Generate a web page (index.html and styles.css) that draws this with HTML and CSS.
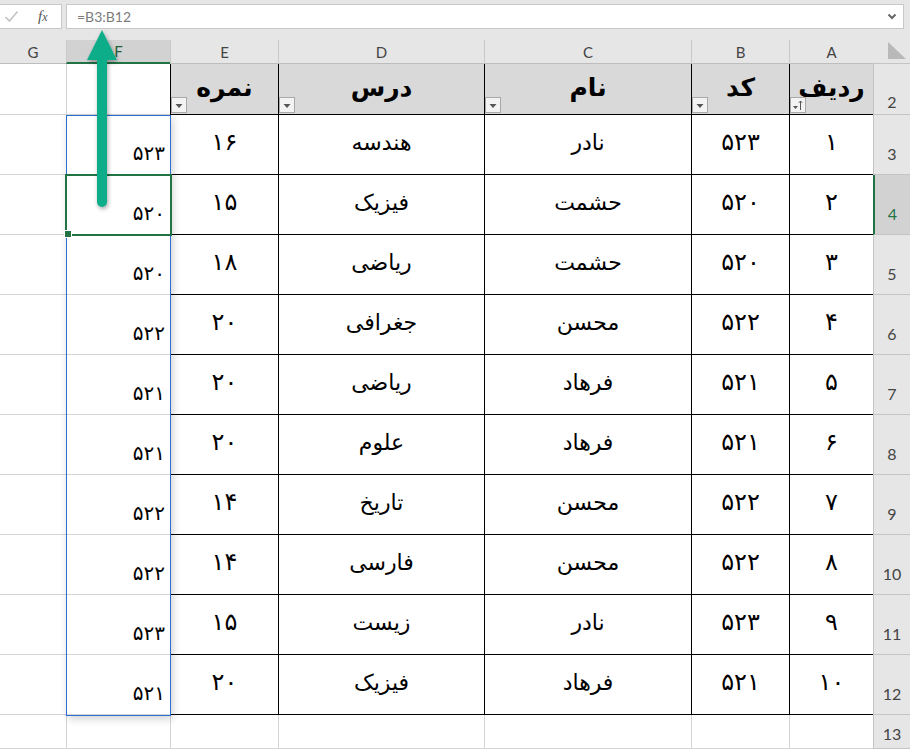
FILE: index.html
```html
<!DOCTYPE html>
<html lang="fa">
<head>
<meta charset="utf-8">
<title>Sheet</title>
<link rel="stylesheet" href="styles.css">
</head>
<body>
<div class="app">
  <div class="fbar">
    <div class="fbtns">
      <svg class="check" width="15" height="13" viewBox="0 0 15 13"><polyline points="1.5,7 5.5,11 13.5,1.5" fill="none" stroke="#c3c3c3" stroke-width="1.6"/></svg>
      <span class="fx">f<span class="fxx">x</span></span>
    </div>
    <div class="finput">
      <span class="ftext">=B3:B12</span>
      <svg class="chev" width="10" height="7" viewBox="0 0 10 7"><polyline points="1.5,1.5 5,5 8.5,1.5" fill="none" stroke="#666" stroke-width="2"/></svg>
    </div>
  </div>
  <div class="wrap">
    <div class="sheet">
      <!-- column headers -->
      <div class="corner"><svg width="18" height="18" viewBox="0 0 18 18"><polygon points="0,0 0,17 18,17" fill="#b9b9b9"/></svg></div>
      <div class="ch">A</div><div class="ch">B</div><div class="ch">C</div><div class="ch">D</div><div class="ch">E</div><div class="ch sel">F</div><div class="ch last">G</div>

      <!-- row 2 -->
      <div class="rh r2">2</div>
      <div class="th">ردیف<span class="fb"><svg width="14" height="14" viewBox="0 0 14 14"><polygon points="2,8 7,8 4.5,11" fill="#555"/><path d="M9.5 12 V3 M7.8 4.8 L9.5 3 L11.2 4.8" fill="none" stroke="#555" stroke-width="1"/></svg></span></div>
      <div class="th">کد<span class="fb"><svg width="14" height="14" viewBox="0 0 14 14"><polygon points="3.5,6 10.5,6 7,10" fill="#555"/></svg></span></div>
      <div class="th">نام<span class="fb"><svg width="14" height="14" viewBox="0 0 14 14"><polygon points="3.5,6 10.5,6 7,10" fill="#555"/></svg></span></div>
      <div class="th">درس<span class="fb"><svg width="14" height="14" viewBox="0 0 14 14"><polygon points="3.5,6 10.5,6 7,10" fill="#555"/></svg></span></div>
      <div class="th">نمره<span class="fb"><svg width="14" height="14" viewBox="0 0 14 14"><polygon points="3.5,6 10.5,6 7,10" fill="#555"/></svg></span></div>
      <div class="c"></div><div class="c last"></div>

      <!-- row 3 -->
      <div class="rh">3</div>
      <div class="t n">۱</div><div class="t n">۵۲۳</div><div class="t">نادر</div><div class="t">هندسه</div><div class="t n">۱۶</div><div class="c f">۵۲۳</div><div class="c last"></div>
      <!-- row 4 -->
      <div class="rh sel">4</div>
      <div class="t n">۲</div><div class="t n">۵۲۰</div><div class="t">حشمت</div><div class="t">فیزیک</div><div class="t n">۱۵</div><div class="c f">۵۲۰</div><div class="c last"></div>
      <!-- row 5 -->
      <div class="rh">5</div>
      <div class="t n">۳</div><div class="t n">۵۲۰</div><div class="t">حشمت</div><div class="t">ریاضی</div><div class="t n">۱۸</div><div class="c f">۵۲۰</div><div class="c last"></div>
      <!-- row 6 -->
      <div class="rh">6</div>
      <div class="t n">۴</div><div class="t n">۵۲۲</div><div class="t">محسن</div><div class="t">جغرافی</div><div class="t n">۲۰</div><div class="c f">۵۲۲</div><div class="c last"></div>
      <!-- row 7 -->
      <div class="rh">7</div>
      <div class="t n">۵</div><div class="t n">۵۲۱</div><div class="t">فرهاد</div><div class="t">ریاضی</div><div class="t n">۲۰</div><div class="c f">۵۲۱</div><div class="c last"></div>
      <!-- row 8 -->
      <div class="rh">8</div>
      <div class="t n">۶</div><div class="t n">۵۲۱</div><div class="t">فرهاد</div><div class="t">علوم</div><div class="t n">۲۰</div><div class="c f">۵۲۱</div><div class="c last"></div>
      <!-- row 9 -->
      <div class="rh">9</div>
      <div class="t n">۷</div><div class="t n">۵۲۲</div><div class="t">محسن</div><div class="t">تاریخ</div><div class="t n">۱۴</div><div class="c f">۵۲۲</div><div class="c last"></div>
      <!-- row 10 -->
      <div class="rh">10</div>
      <div class="t n">۸</div><div class="t n">۵۲۲</div><div class="t">محسن</div><div class="t">فارسی</div><div class="t n">۱۴</div><div class="c f">۵۲۲</div><div class="c last"></div>
      <!-- row 11 -->
      <div class="rh">11</div>
      <div class="t n">۹</div><div class="t n">۵۲۳</div><div class="t">نادر</div><div class="t">زیست</div><div class="t n">۱۵</div><div class="c f">۵۲۳</div><div class="c last"></div>
      <!-- row 12 -->
      <div class="rh">12</div>
      <div class="t n">۱۰</div><div class="t n">۵۲۱</div><div class="t">فرهاد</div><div class="t">فیزیک</div><div class="t n">۲۰</div><div class="c f">۵۲۱</div><div class="c last"></div>
      <!-- row 13 -->
      <div class="rh r13">13</div>
      <div class="c"></div><div class="c"></div><div class="c"></div><div class="c"></div><div class="c"></div><div class="c"></div><div class="c last"></div>
    </div>

    <div class="spill"></div>
    <div class="selbox"><span class="handle"></span></div>
    <svg class="arrow" width="50" height="200" viewBox="0 0 50 200">
      <defs>
        <filter id="sh" x="-50%" y="-20%" width="200%" height="140%">
          <feDropShadow dx="1" dy="2" stdDeviation="2" flood-color="#000" flood-opacity="0.35"/>
        </filter>
      </defs>
      <g filter="url(#sh)">
        <line x1="18" y1="30" x2="18" y2="176" stroke="#0aad8a" stroke-width="10" stroke-linecap="round"/>
        <polygon points="18,4 33,34 3,34" fill="#0aad8a"/>
      </g>
    </svg>
  </div>
</div>
</body>
</html>
```
FILE: styles.css
```css
html, body {
  margin: 0;
  padding: 0;
  overflow: hidden;
  background: #e6e6e6;
}
.app {
  width: 910px;
  height: 749px;
  display: flex;
  flex-direction: column;
}
.fbar {
  height: 40px;
  box-sizing: border-box;
  padding-top: 4px;
  display: flex;
  gap: 4px;
  background: #e6e6e6;
}
.fbtns {
  width: 62px;
  height: 25px;
  box-sizing: border-box;
  background: #fff;
  border: 1px solid #c8c8c8;
  border-left: none;
  display: flex;
  align-items: center;
  padding-left: 4px;
  gap: 19px;
}
.fx {
  font-family: "Liberation Serif", serif;
  font-style: italic;
  font-size: 15px;
  color: #555;
  line-height: 1;
}
.fxx {
  font-size: 12px;
}
.finput {
  width: 838px;
  height: 25px;
  box-sizing: border-box;
  background: #fff;
  border: 1px solid #c8c8c8;
  display: flex;
  align-items: center;
  justify-content: space-between;
  padding: 0 6px 0 10px;
}
.ftext {
  font-family: Lato, "Open Sans", sans-serif;
  font-size: 14px;
  color: #7b7b7b;
}
.wrap {
  position: relative;
  flex: 1;
  background: #fff;
}
.sheet {
  direction: rtl;
  display: grid;
  grid-template-columns: 37px 84px 98px 207px 206px 108px 104px 66px;
  grid-template-rows: 24px 51px repeat(10, 60px) 34px;
}
.sheet > div {
  box-sizing: border-box;
  position: relative;
}
.corner {
  background: #e6e6e6;
  border-bottom: 1px solid #c4c4c4;
  display: flex;
  align-items: flex-end;
  padding: 0 2px 3px 0;
}
.corner svg {
  margin-right: 2px;
}
.ch {
  background: #e6e6e6;
  border-left: 1px solid #c9c9c9;
  border-bottom: 1px solid #bdbdbd;
  display: flex;
  align-items: center;
  justify-content: center;
  font-family: Lato, "Open Sans", sans-serif;
  font-size: 15px;
  color: #444;
}
.ch.sel {
  background: #d2d2d2;
  color: #1e5e3a;
  border-bottom: 2px solid #217346;
}
.ch.last, .c.last {
  border-left: none;
}
.rh {
  background: #e6e6e6;
  border-left: 1px solid #c4c4c4;
  border-bottom: 1px solid #c4c4c4;
  display: flex;
  align-items: flex-end;
  justify-content: center;
  padding-bottom: 11px;
  font-family: Lato, "Open Sans", sans-serif;
  font-size: 16px;
  color: #444;
}
.rh.r2 {
  padding-bottom: 3px;
}
.rh.r13 {
  align-items: flex-start;
  padding-top: 9px;
  padding-bottom: 0;
}
.rh.sel {
  background: #d2d2d2;
  color: #217346;
  border-left: 2px solid #217346;
}
.c {
  background: #fff;
  border-left: 1px solid #d4d4d4;
  border-bottom: 1px solid #d4d4d4;
}
.t, .th {
  border-left: 1px solid #000;
  border-bottom: 1px solid #000;
  display: flex;
  align-items: center;
  justify-content: center;
  font-family: "DejaVu Sans", sans-serif;
  color: #000;
}
.t {
  background: #fff;
  font-size: 22px;
  padding-bottom: 4px;
}
.t.n {
  font-size: 24px;
  padding-bottom: 6px;
}
.th {
  background: #d9d9d9;
  font-size: 25px;
  font-weight: bold;
  padding-bottom: 3px;
}
.fb {
  position: absolute;
  left: 0;
  bottom: 1px;
  width: 16px;
  height: 16px;
  box-sizing: border-box;
  border: 1px solid #a9a9a9;
  background: #f3f3f3;
  display: flex;
  align-items: center;
  justify-content: center;
}
.f {
  display: flex;
  align-items: flex-end;
  justify-content: flex-start;
  padding: 0 5px 9px 0;
  font-family: "DejaVu Sans", sans-serif;
  font-size: 20px;
  color: #000;
}
.spill {
  position: absolute;
  left: 66px;
  top: 75px;
  width: 105px;
  height: 601px;
  box-sizing: border-box;
  border: 1px solid #2b6ed2;
  box-shadow: 2px 3px 8px rgba(0, 0, 0, 0.18);
  pointer-events: none;
}
.selbox {
  position: absolute;
  left: 65px;
  top: 134px;
  width: 107px;
  height: 62px;
  box-sizing: border-box;
  border: 2px solid #217346;
}
.handle {
  position: absolute;
  left: -3px;
  bottom: -4px;
  width: 6px;
  height: 6px;
  background: #217346;
  border: 1px solid #fff;
}
.arrow {
  position: absolute;
  left: 84px;
  top: -14px;
  overflow: visible;
}
```
